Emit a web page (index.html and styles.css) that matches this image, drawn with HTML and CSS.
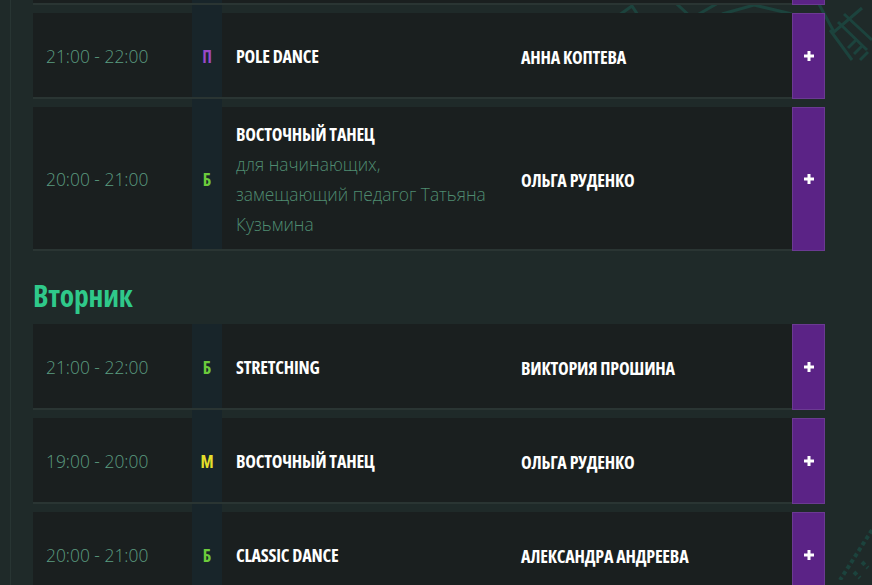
FILE: index.html
```html
<!DOCTYPE html>
<html lang="ru">
<head>
<meta charset="utf-8">
<title>Расписание</title>
<link rel="stylesheet" href="styles.css">
</head>
<body>
<div class="deco deco-top">
  <svg width="300" height="70" viewBox="0 0 300 70" fill="none" stroke="#1c433d" stroke-width="3">
    <path d="M12 40 L60 6 L82 40 Z"/>
    <path d="M32 34 L58 16 L70 34"/>
    <path d="M95 -5 L120 18 L160 -5"/>
    <path d="M150 14 L182 5 L220 14"/>
    <path d="M242 -5 L262 32 L290 8"/>
    <path d="M258 30 L280 60 M266 22 L295 50 M272 14 L300 40"/>
    <path d="M276 48 l8 -8 M282 54 l8 -8 M288 60 l8 -8"/>
  </svg>
</div>
<div class="deco deco-bottom">
  <svg width="40" height="60" viewBox="0 0 40 60" fill="none" stroke="#1c433d" stroke-width="4" stroke-dasharray="4 3">
    <path d="M40 10 L8 60"/>
    <path d="M30 42 l6 6 M22 52 l6 6"/>
  </svg>
</div>
<main class="page">
  <section class="day">
    <div class="list first">
      <div class="row">
        <div class="time"></div>
        <div class="level"></div>
        <div class="title"></div>
        <div class="trainer"></div>
        <div class="add"></div>
      </div>
      <div class="row">
        <div class="time">21:00 - 22:00</div>
        <div class="level lv-p">П</div>
        <div class="title"><span class="name">POLE DANCE</span></div>
        <div class="trainer"><span class="name">АННА КОПТЕВА</span></div>
        <div class="add"><svg width="10" height="10" viewBox="0 0 10 10"><rect x="3.5" y="0" width="3" height="10" fill="#fff"/><rect x="0" y="3.5" width="10" height="3" fill="#fff"/></svg></div>
      </div>
      <div class="row">
        <div class="time">20:00 - 21:00</div>
        <div class="level lv-b">Б</div>
        <div class="title"><span class="name">ВОСТОЧНЫЙ ТАНЕЦ</span><span class="desc">для начинающих,<br>замещающий педагог Татьяна Кузьмина</span></div>
        <div class="trainer"><span class="name">ОЛЬГА РУДЕНКО</span></div>
        <div class="add"><svg width="10" height="10" viewBox="0 0 10 10"><rect x="3.5" y="0" width="3" height="10" fill="#fff"/><rect x="0" y="3.5" width="10" height="3" fill="#fff"/></svg></div>
      </div>
    </div>
  </section>
  <section class="day">
    <h2 class="day-name">Вторник</h2>
    <div class="list">
      <div class="row">
        <div class="time">21:00 - 22:00</div>
        <div class="level lv-b">Б</div>
        <div class="title"><span class="name">STRETCHING</span></div>
        <div class="trainer"><span class="name">ВИКТОРИЯ ПРОШИНА</span></div>
        <div class="add"><svg width="10" height="10" viewBox="0 0 10 10"><rect x="3.5" y="0" width="3" height="10" fill="#fff"/><rect x="0" y="3.5" width="10" height="3" fill="#fff"/></svg></div>
      </div>
      <div class="row">
        <div class="time">19:00 - 20:00</div>
        <div class="level lv-m">М</div>
        <div class="title"><span class="name">ВОСТОЧНЫЙ ТАНЕЦ</span></div>
        <div class="trainer"><span class="name">ОЛЬГА РУДЕНКО</span></div>
        <div class="add"><svg width="10" height="10" viewBox="0 0 10 10"><rect x="3.5" y="0" width="3" height="10" fill="#fff"/><rect x="0" y="3.5" width="10" height="3" fill="#fff"/></svg></div>
      </div>
      <div class="row">
        <div class="time">20:00 - 21:00</div>
        <div class="level lv-b">Б</div>
        <div class="title"><span class="name">CLASSIC DANCE</span></div>
        <div class="trainer"><span class="name">АЛЕКСАНДРА АНДРЕЕВА</span></div>
        <div class="add"><svg width="10" height="10" viewBox="0 0 10 10"><rect x="3.5" y="0" width="3" height="10" fill="#fff"/><rect x="0" y="3.5" width="10" height="3" fill="#fff"/></svg></div>
      </div>
    </div>
  </section>
</main>
</body>
</html>
```

FILE: styles.css
```css
* { box-sizing: border-box; }
html, body { margin: 0; padding: 0; }
body {
  background: #1f2a29;
  font-family: "Open Sans", "Noto Sans", sans-serif;
  width: 872px;
  height: 585px;
  overflow: hidden;
  position: relative;
}
.deco { position: absolute; z-index: 0; pointer-events: none; }
.deco-top { right: 0; top: 0; }
.deco-bottom { right: 0; bottom: 0; }
.page {
  position: relative;
  z-index: 1;
  margin-left: 10px;
  border-left: 1px solid #283533;
  background: transparent;
  padding-left: 22px;
  width: 816px;
  min-height: 585px;
}
.day { margin: 0; }
.list {
  display: flex;
  flex-direction: column;
  gap: 8px;
  width: 792px;
  background: linear-gradient(to right, transparent 159px, #18252a 159px, #18252a 189px, transparent 189px);
}
.list.first { margin-top: -81px; }
.row {
  display: flex;
  min-height: 86px;
  background: #1a1f1f;
  border-bottom: 2px solid #2a3533;
}
.time {
  width: 159px;
  flex: none;
  padding: 2px 0 0 13px;
  display: flex;
  align-items: center;
  font-size: 17.4px;
  font-weight: 300;
  color: #5b9c80;
}
.level {
  width: 30px;
  flex: none;
  background: #18252a;
  display: flex;
  align-items: center;
  justify-content: center;
  padding-top: 2px;
  font-size: 17px;
  font-weight: 700;
  font-stretch: 75%;
}
.lv-p { color: #9a48c8; }
.lv-b { color: #6ccb3c; }
.lv-m { color: #e4df2a; }
.title, .trainer {
  display: flex;
  flex-direction: column;
  justify-content: center;
  padding: 12px 14px 10px;
}
.trainer { padding-top: 14px; }
.title { width: 285px; flex: none; }
.trainer { flex: 1; }
.name {
  font-size: 18px;
  line-height: 30px;
  font-weight: 700;
  font-stretch: 75%;
  color: #ffffff;
  letter-spacing: -0.2px;
}
.desc {
  font-size: 17.4px;
  line-height: 30px;
  font-weight: 300;
  color: #4f8c71;
}
.add {
  width: 33px;
  flex: none;
  margin-bottom: -2px;
  background: #5b2386;
  border: 1px solid #6b3a92;
  display: flex;
  align-items: center;
  justify-content: center;
}
.day-name {
  margin: 27px 0 10px;
  font-size: 29.5px;
  line-height: 36px;
  font-weight: 700;
  font-stretch: 87.5%;
  color: #2fc98a;
  letter-spacing: -0.2px;
}
```
